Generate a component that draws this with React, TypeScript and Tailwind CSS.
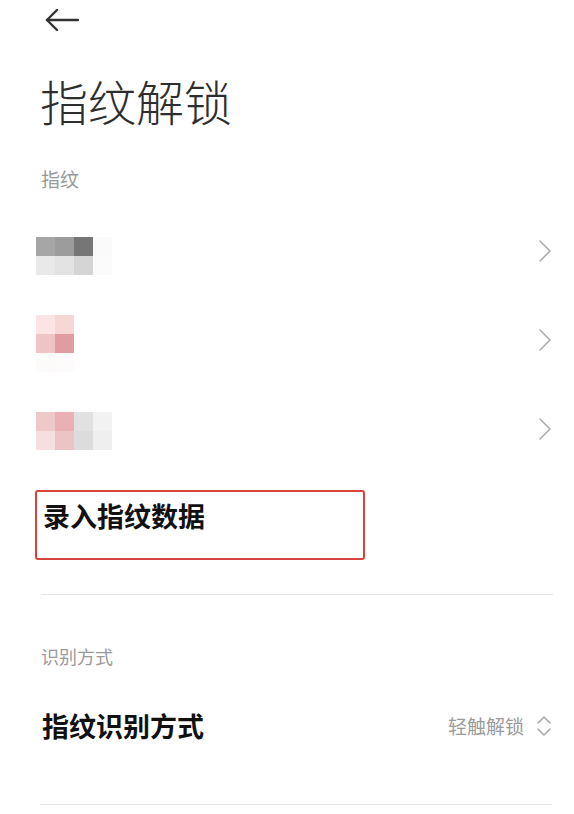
const font = { fontFamily: '"Noto Sans CJK SC", "Noto Sans", sans-serif' };

type Row = { top: string; cells: string[][] };

// blurred fingerprint names, drawn as pixel blocks
const rows: Row[] = [
  {
    top: 'mt-[31px]',
    cells: [
      ['bg-[#a6a6a6]', 'bg-[#9c9c9c]', 'bg-[#767676]', 'bg-[#fafafa]'],
      ['bg-[#e9e9e9]', 'bg-[#e3e3e3]', 'bg-[#d5d5d5]', 'bg-[#fbfbfb]'],
    ],
  },
  {
    top: 'mt-[20px]',
    cells: [
      ['bg-[#fce4e4]', 'bg-[#f9d6d6]'],
      ['bg-[#efc4c4]', 'bg-[#e09da1]'],
      ['bg-[#fdfafa]', 'bg-[#fdfbfb]'],
    ],
  },
  {
    top: 'mt-[28px]',
    cells: [
      ['bg-[#efc9c9]', 'bg-[#eab0b3]', 'bg-[#e1e1e1]', 'bg-[#f2f2f2]'],
      ['bg-[#f6dfe0]', 'bg-[#ecc4c6]', 'bg-[#dcdcdc]', 'bg-[#efefef]'],
    ],
  },
];

function PixelName({ cells }: { cells: string[][] }) {
  return (
    <div className="flex flex-col">
      {cells.map((line, i) => (
        <div key={i} className="flex">
          {line.map((c, j) => (
            <div key={j} className={`w-[19px] h-[19px] ${c}`} />
          ))}
        </div>
      ))}
    </div>
  );
}

function Chevron() {
  return (
    <svg width="12" height="22" viewBox="0 0 12 22" fill="none" stroke="#a9a9a9" strokeWidth="1.5" strokeLinecap="round" strokeLinejoin="round">
      <polyline points="1,1 11,11 1,21" />
    </svg>
  );
}

function UpDown() {
  return (
    <svg width="16" height="22" viewBox="0 0 16 22" fill="none" stroke="#a8a8a8" strokeWidth="1.6" strokeLinecap="round" strokeLinejoin="round">
      <polyline points="2,8 8,2 14,8" />
      <polyline points="2,14 8,20 14,14" />
    </svg>
  );
}

export default function App() {
  return (
    <div className="w-full min-h-[814px] bg-white" style={font}>
      {/* header */}
      <div className="h-[40px] pl-[45px] pt-[9px]">
        <svg width="34" height="24" viewBox="0 0 34 24" fill="none" stroke="#333" strokeWidth="2.4" strokeLinecap="round" strokeLinejoin="round">
          <line x1="2" y1="11" x2="33" y2="11" />
          <polyline points="12,1 2,11 12,21" />
        </svg>
      </div>

      <h1 className="mt-[36px] pl-[40px] text-[48px] leading-none font-light text-[#2e2e2e]">指纹解锁</h1>

      <p className="mt-[45px] pl-[41px] text-[19px] leading-none text-[#9a9a9a]">指纹</p>

      <div className="mt-[18px]">
        {rows.map((r, i) => (
          <div key={i} className="h-[89px] flex justify-between pl-[36px] pr-[23px]">
            <div className={r.top}>
              <PixelName cells={r.cells} />
            </div>
            <div className="self-center">
              <Chevron />
            </div>
          </div>
        ))}
      </div>

      <div className="mt-[17px] ml-[35px] w-[330px] h-[70px] border-2 border-[#d8443c] rounded-[3px] pl-[6px] pt-[10px]">
        <span className="text-[27px] leading-none font-bold text-[#111]">录入指纹数据</span>
      </div>

      <div className="mt-[34px] ml-[41px] mr-[21px] h-px bg-[#e6e6e6]" />

      <p className="mt-[52px] pl-[41px] text-[18px] leading-none text-[#9a9a9a]">识别方式</p>

      <div className="mt-[47px] pl-[42px] pr-[22px] flex items-center justify-between">
        <span className="text-[27px] leading-none font-bold text-[#111]">指纹识别方式</span>
        <div className="flex items-center gap-[12px]">
          <span className="text-[19px] leading-none text-[#9a9a9a]">轻触解锁</span>
          <UpDown />
        </div>
      </div>

      <div className="mt-[65px] ml-[40px] mr-[22px] h-px bg-[#e6e6e6]" />
    </div>
  );
}
